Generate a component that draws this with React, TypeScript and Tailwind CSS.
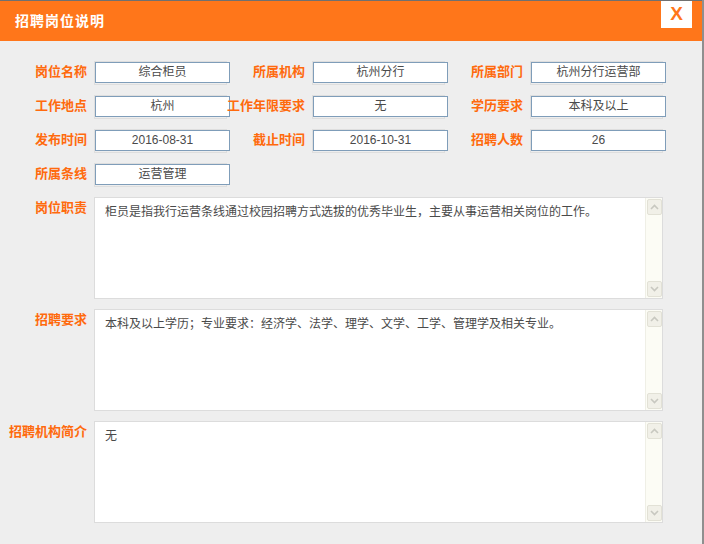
import React from 'react'

const font = "'Liberation Sans', 'Noto Sans CJK SC', sans-serif"

const rows: [string, string][][] = [
  [['岗位名称', '综合柜员'], ['所属机构', '杭州分行'], ['所属部门', '杭州分行运营部']],
  [['工作地点', '杭州'], ['工作年限要求', '无'], ['学历要求', '本科及以上']],
  [['发布时间', '2016-08-31'], ['截止时间', '2016-10-31'], ['招聘人数', '26']],
  [['所属条线', '运营管理']],
]

const areas: [string, string][] = [
  ['岗位职责', '柜员是指我行运营条线通过校园招聘方式选拔的优秀毕业生，主要从事运营相关岗位的工作。'],
  ['招聘要求', '本科及以上学历；专业要求：经济学、法学、理学、文学、工学、管理学及相关专业。'],
  ['招聘机构简介', '无'],
]

function Label({ text }: { text: string }) {
  return (
    <div className="w-[78px] shrink-0 h-[22px] leading-[22px] text-right text-[13px] font-bold text-[#ff6a0d] whitespace-nowrap">
      {text}
    </div>
  )
}

function Field({ value }: { value: string }) {
  return (
    <div className="w-[133px] h-[24px] border border-[#dedede] shrink-0">
      <div className="w-[135px] h-[21px] border border-[#7f9db9] bg-white text-center text-[12px] leading-[19px] text-[#4a4a4a]">
        {value}
      </div>
    </div>
  )
}

function ScrollBtn({ up }: { up: boolean }) {
  return (
    <div className="w-[15px] h-[16px] bg-[#f1f0e8] border border-[#e2e1d6] rounded-[2px] flex items-center justify-center">
      <svg width="9" height="6" viewBox="0 0 9 6">
        <path
          d={up ? 'M1 5 L4.5 1.5 L8 5' : 'M1 1 L4.5 4.5 L8 1'}
          fill="none"
          stroke="#c8c8c0"
          strokeWidth="1.6"
        />
      </svg>
    </div>
  )
}

function Area({ text }: { text: string }) {
  return (
    <div className="w-[569px] h-[102px] border border-[#dcdcdc] bg-white flex shrink-0">
      <div className="flex-1 pl-[10px] pt-[4px] text-[12px] leading-[20px] text-[#4a4a4a]">{text}</div>
      <div className="w-[17px] bg-[#fcfcf5] border-l border-[#efefe6] flex flex-col justify-between items-center py-[1px]">
        <ScrollBtn up />
        <ScrollBtn up={false} />
      </div>
    </div>
  )
}

export default function App() {
  return (
    <div className="flex w-[704px] h-[544px] overflow-hidden" style={{ fontFamily: font }}>
      <div className="w-[702px] flex flex-col bg-[#eeeeee] border-t border-[#707070]">
        <div className="h-[40px] bg-[#ff761a] flex items-start justify-between pl-[15px]">
          <div className="mt-[10px] text-[14px] font-bold text-white tracking-[1px]">招聘岗位说明</div>
          <div className="w-[31px] h-[27px] bg-white mr-[10px] flex items-center justify-center text-[19px] font-bold text-[#ff761a]">
            X
          </div>
        </div>
        <div className="flex flex-col pl-[9px] pt-[20px] gap-[10px]">
          {rows.map((row, i) => (
            <div key={i} className="flex">
              {row.map(([l, v]) => (
                <div key={l} className="flex gap-[7px]">
                  <Label text={l} />
                  <Field value={v} />
                </div>
              ))}
            </div>
          ))}
          {areas.map(([l, t]) => (
            <div key={l} className="flex gap-[7px]">
              <Label text={l} />
              <Area text={t} />
            </div>
          ))}
        </div>
      </div>
      <div className="w-[2px] bg-[#8f8f8f]" />
    </div>
  )
}
